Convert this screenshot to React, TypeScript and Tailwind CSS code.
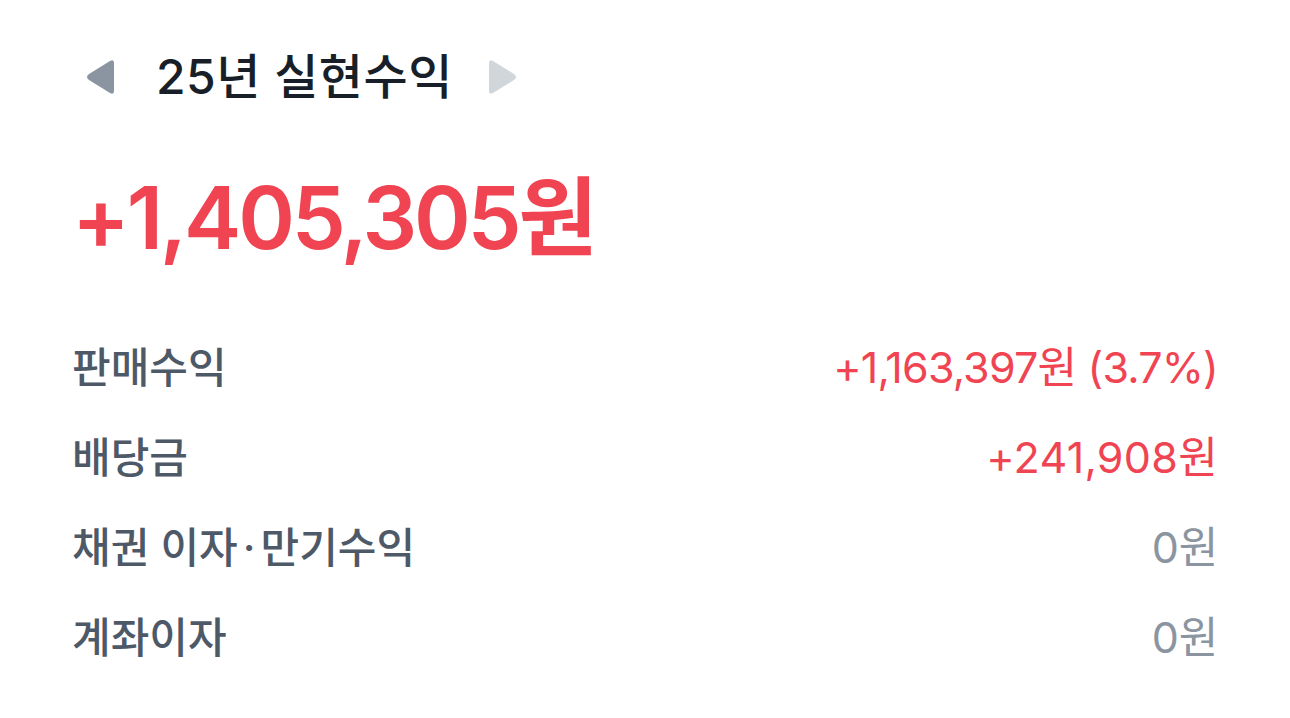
import React from "react";

const font = { fontFamily: "Inter, 'Noto Sans CJK KR', sans-serif" };

function Tri({ dir, color }: { dir: "l" | "r"; color: string }) {
  return (
    <svg width="34" height="36" viewBox="0 0 34 36">
      {dir === "l" ? (
        <path d="M30 4 L30 32 Q30 36 26 34 L5 21 Q1 18 5 15 L26 2 Q30 0 30 4 Z" fill={color} />
      ) : (
        <path d="M4 4 L4 32 Q4 36 8 34 L29 21 Q33 18 29 15 L8 2 Q4 0 4 4 Z" fill={color} />
      )}
    </svg>
  );
}

function Row({ label, value, red }: { label: React.ReactNode; value: React.ReactNode; red?: boolean }) {
  return (
    <div className="flex h-[90px] items-center justify-between">
      <span className="text-[42px] font-medium text-[#4e5968]">{label}</span>
      <span className={`text-[43px] tracking-[-0.2px] ${red ? "text-[#f04452]" : "text-[#8b95a1]"}`}>{value}</span>
    </div>
  );
}

export default function App() {
  return (
    <div className="w-[1290px] h-[718px] bg-white px-[72px] pt-[40px]" style={font}>
      <div className="flex h-[74px] items-center">
        <div className="ml-[12px]"><Tri dir="l" color="#8b95a1" /></div>
        <span className="ml-[38px] text-[48px] font-medium text-[#191f28] tracking-[0.5px]">25년 실현수익</span>
        <div className="ml-[32px]"><Tri dir="r" color="#d1d6db" /></div>
      </div>
      <div className="mt-[54px] h-[100px] flex items-center text-[86px] font-semibold text-[#f04452] tracking-[-3.2px] leading-none">
        +1,405,305원
      </div>
      <div className="mt-[54px]">
        <Row
          label="판매수익"
          value={<span className="tracking-[-0.8px]">+1,163,397원 (3.7%)</span>}
          red
        />
        <Row label="배당금" value={<span className="tracking-[0.3px]">+241,908원</span>} red />
        <Row
          label={
            <>
              채권 이자<span className="mx-[5px]">·</span>만기수익
            </>
          }
          value="0원"
        />
        <Row label="계좌이자" value="0원" />
      </div>
    </div>
  );
}
